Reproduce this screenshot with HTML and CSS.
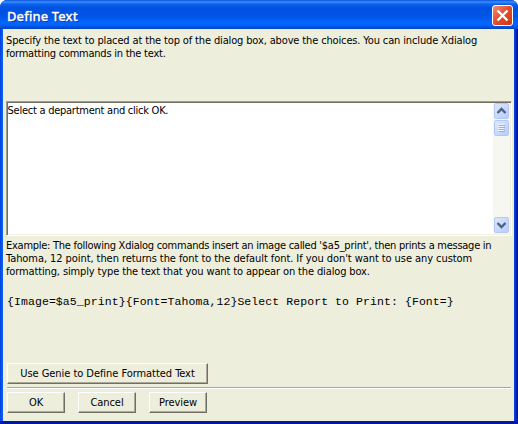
FILE: index.html
```
<!DOCTYPE html>
<html lang="en">
<head>
<meta charset="utf-8">
<title>Define Text</title>
<link rel="stylesheet" href="styles.css">
</head>
<body>
<div class="window">
  <header class="titlebar">
    <h1 class="title">Define Text</h1>
    <button class="close" aria-label="Close"><svg width="21" height="21" viewBox="0 0 21 21"><path d="M5.5 5.5l10 10M15.5 5.5l-10 10" stroke="#fff" stroke-width="2.3"/></svg></button>
  </header>
  <main class="body">
    <p class="copy intro"><span class="l1">Specify the text to placed at the top of the dialog box, above the choices. You can include Xdialog</span><br><span class="l2">formatting commands in the text.</span></p>
    <div class="field">
      <div class="copy content"><span class="l3">Select a department and click OK.</span></div>
      <div class="scrollbar">
        <div class="sb up"><svg width="15" height="16" viewBox="0 0 15 16"><path d="M3.5 10l4-4 4 4" fill="none" stroke="#4d6185" stroke-width="2.4"/></svg></div>
        <div class="sb thumb"><svg width="15" height="16" viewBox="0 0 15 16"><path d="M4 4.5h6M4 6.5h6M4 8.5h6M4 10.5h6" stroke="#eef4fe"/><path d="M5 5.5h6M5 7.5h6M5 9.5h6M5 11.5h6" stroke="#8cb0f8"/></svg></div>
        <div class="track"></div>
        <div class="sb down"><svg width="15" height="16" viewBox="0 0 15 16"><path d="M3.5 6l4 4 4-4" fill="none" stroke="#4d6185" stroke-width="2.4"/></svg></div>
      </div>
    </div>
    <p class="copy example"><span class="l4">Example: The following Xdialog commands insert an image called '$a5_print', then prints a message in</span><br><span class="l5">Tahoma, 12 point, then returns the font to the default font. If you don't want to use any custom</span><br><span class="l6">formatting, simply type the text that you want to appear on the dialog box.</span></p>
    <code class="code">{Image=$a5_print}{Font=Tahoma,12}Select Report to Print: {Font=}</code>
    <button class="btn genie"><span>Use Genie to Define Formatted Text</span></button>
    <div class="rule"></div>
    <div class="actions">
      <button class="btn">OK</button>
      <button class="btn">Cancel</button>
      <button class="btn">Preview</button>
    </div>
  </main>
</div>
</body>
</html>
```
FILE: styles.css
```
* { box-sizing: border-box; }
body { margin: 0; background: #fff; font-family: "DejaVu Sans Condensed", "DejaVu Sans", sans-serif; font-stretch: condensed; font-size: 11px; color: #000; }
.window { width: 518px; height: 424px; padding: 0 4px 3px 3px; border-radius: 7px 7px 0 0; overflow: hidden; background: linear-gradient(90deg, #0040d8 0, #0a5cf0 2px, #0a5cf0 3px, #0845e0 514px, #0030c8 516px, #001490 517px); display: flex; flex-direction: column; }
.titlebar { height: 29px; flex: none; margin: 0 -4px 0 -3px; padding: 5px 5px 0 7px; display: flex; justify-content: space-between; background: linear-gradient(#0a50d8 0, #3a90ff 2px, #0c62ee 4px, #0052e0 8px, #0054e6 16px, #0264fc 22px, #0264fc 25px, #0048d0 28px, #0040c0 29px); }
.title { margin: 0; font: 500 13px/22px "Noto Sans", sans-serif; color: #fff; -webkit-text-stroke: 0.3px #fff; text-shadow: 1px 1px #0a2a88; white-space: nowrap; letter-spacing: 0.1px; }
.close { width: 21px; height: 21px; padding: 0; border: 1px solid #fff; border-radius: 3px; background: linear-gradient(135deg, #f09078, #e45030 45%, #c83810); }
.close svg { display: block; margin: -1px; }
.body { flex: 1; background: #eeeedd; padding: 5px 2px 0 3px; display: flex; flex-direction: column; }
.copy { margin: 0; line-height: 13px; white-space: nowrap; }
.intro { height: 67px; }
.l1 { letter-spacing: -0.14px; }
.l2 { letter-spacing: -0.24px; }
.l3 { letter-spacing: -0.25px; }
.l4 { letter-spacing: -0.26px; }
.l5 { letter-spacing: -0.07px; }
.l6 { letter-spacing: -0.13px; }
.field { height: 135px; flex: none; display: flex; background: #fff; border: 1px solid; border-color: #a09f90 #fff #fff #a09f90; box-shadow: inset 1px 1px #716f64, inset -1px -1px #f1efe2; padding: 1px; }
.content { flex: 1; padding-top: 1px; margin-left: -0.5px; }
.scrollbar { width: 17px; background: #f7f7f2; padding: 0 1px; display: flex; flex-direction: column; }
.sb { width: 15px; height: 16px; flex: none; border: 1px solid #b4c8f6; border-radius: 2px; background: linear-gradient(135deg, #dce6fe, #b8cdfa); margin-bottom: 1px; }
.sb svg { display: block; margin: -1px; }
.track { flex: 1; }
.example { margin-top: 3px; }
.code { margin: 17px 0 0 1px; font: 11.5px/14px "Liberation Mono", monospace; letter-spacing: 0.08px; white-space: pre; }
.btn { width: 58px; height: 21px; padding: 0; font: inherit; line-height: 17px; letter-spacing: -0.05px; color: #000; background: #eeeedd; border: 1px solid; border-color: #fff #716f64 #716f64 #fff; box-shadow: inset -1px -1px #aca899; white-space: nowrap; }
.genie { width: 201px; margin: 54px 0 0 1px; }
.rule { width: 504px; height: 2px; margin: 3px 0 0 1px; background: #aca899; border-bottom: 1px solid #fff; }
.actions { display: flex; gap: 13px; margin: 3px 0 0 1px; }
.window { border-bottom: 3px solid #0018a8; padding-bottom: 0; }
```
